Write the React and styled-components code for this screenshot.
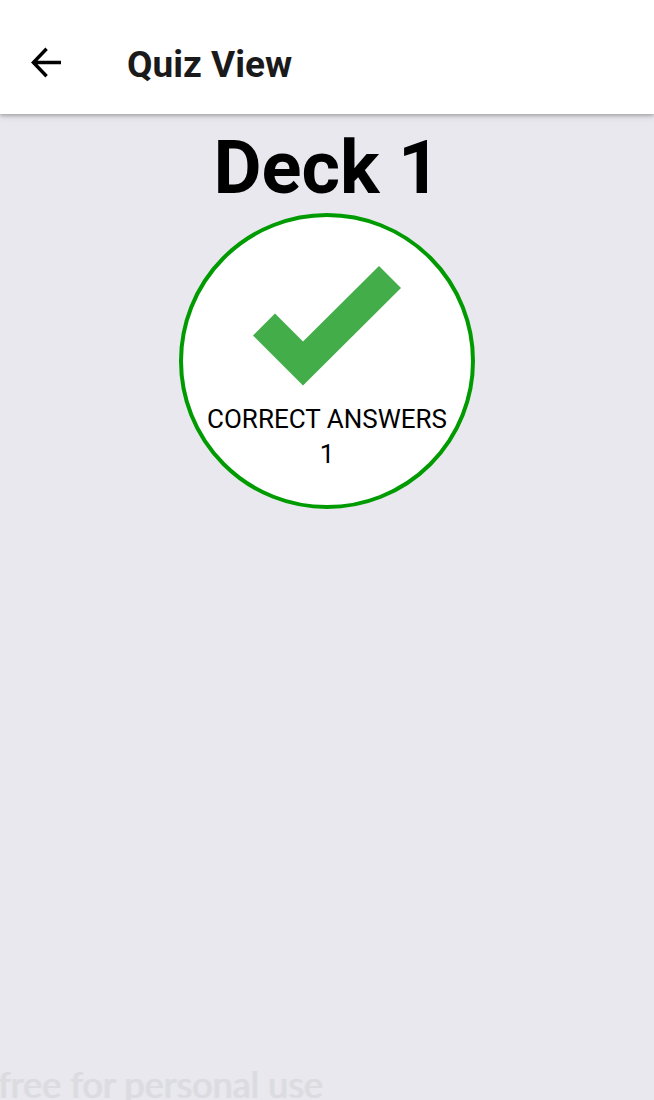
import React from "react";
import styled, { createGlobalStyle } from "styled-components";

const GlobalStyle = createGlobalStyle`
  *, *::before, *::after { box-sizing: border-box; }
  body {
    margin: 0;
    background: #e9e8ee;
    color: #000;
    font-family: Roboto, "Liberation Sans", sans-serif;
  }
`;

const Screen = styled.div`
  display: flex;
  flex-direction: column;
  min-height: 100vh;
  overflow: hidden;
`;

const AppBar = styled.header`
  display: flex;
  align-items: center;
  gap: 49px;
  height: 114px;
  padding: 16px 14px 0;
  background: #fff;
  box-shadow: 0 2px 3px rgba(0, 0, 0, 0.2), 0 2px 8px rgba(0, 0, 0, 0.12);
`;

const BackButton = styled.button`
  display: flex;
  align-items: center;
  justify-content: center;
  width: 64px;
  height: 64px;
  padding: 0 0 6px;
  border: 0;
  background: none;
  color: #000;
  cursor: pointer;
`;

const ScreenTitle = styled.h1`
  margin: 0;
  color: #1a1a1a;
  font-size: 37px;
  font-weight: 700;
  line-height: 44px;
`;

const Content = styled.main`
  display: flex;
  flex: 1;
  flex-direction: column;
  align-items: center;
  padding-top: 8px;
`;

const DeckName = styled.h2`
  margin: 0;
  font-size: 74px;
  font-weight: 700;
  line-height: 91px;
`;

const ScoreCircle = styled.section`
  display: flex;
  flex-direction: column;
  align-items: center;
  width: 296px;
  height: 296px;
  padding-top: 49px;
  border: 4px solid #009b00;
  border-radius: 50%;
  background: #fff;
`;

const CheckMark = styled.svg`
  display: block;
  width: 148px;
  height: 120px;
  margin-bottom: 16px;
`;

const ScoreText = styled.p`
  margin: 0;
  font-size: 26px;
  line-height: 35px;
  white-space: nowrap;
`;

const LicenseNote = styled.footer`
  margin-left: -2px;
  color: #dcdce0;
  font-family: Lato, sans-serif;
  font-size: 36px;
  line-height: 32px;
  text-shadow: 1px 0 0 #dfdfe2, -1px 0 0 #e2e4ea;
`;

function BackIcon() {
  return (
    <svg width="32" height="32" viewBox="0 0 32 32" fill="none" stroke="currentColor" strokeWidth="3.4" aria-hidden="true">
      <path d="M31 16.5H4M16.6 2.8 3.4 16.5 16.6 30.2" />
    </svg>
  );
}

export default function App() {
  return (
    <>
      <GlobalStyle />
      <Screen>
        <AppBar>
          <BackButton type="button" aria-label="Back">
            <BackIcon />
          </BackButton>
          <ScreenTitle>Quiz View</ScreenTitle>
        </AppBar>
        <Content>
          <DeckName>Deck 1</DeckName>
          <ScoreCircle>
            <CheckMark viewBox="0 0 148 120" aria-hidden="true">
              <path d="M0 69.5 22 47.5 50 75.5 126 0 148 22 50 119.5Z" fill="#43ad49" />
            </CheckMark>
            <ScoreText>CORRECT ANSWERS</ScoreText>
            <ScoreText>1</ScoreText>
          </ScoreCircle>
        </Content>
        <LicenseNote>free for personal use</LicenseNote>
      </Screen>
    </>
  );
}
